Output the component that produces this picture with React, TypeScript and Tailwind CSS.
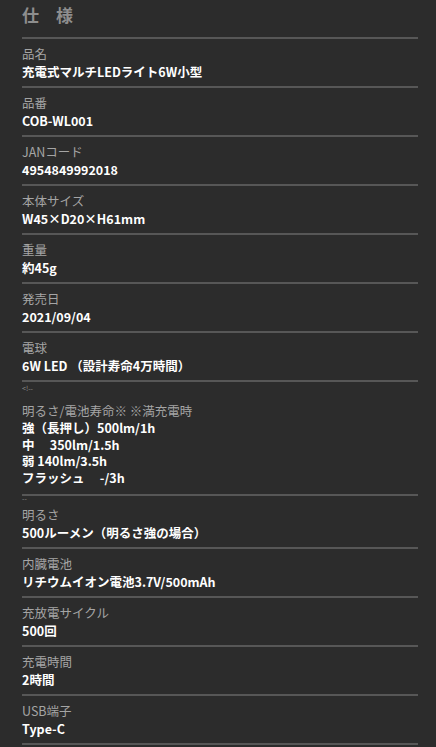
const specs = [
  { label: '品名', value: '充電式マルチLEDライト6W小型' },
  { label: '品番', value: 'COB-WL001' },
  { label: 'JANコード', value: '4954849992018' },
  { label: '本体サイズ', value: 'W45×D20×H61mm' },
  { label: '重量', value: '約45g' },
  { label: '発売日', value: '2021/09/04' },
  { label: '電球', value: '6W LED （設計寿命4万時間）' },
]

const specsAfter = [
  { label: '明るさ', value: '500ルーメン（明るさ強の場合）' },
  { label: '内臓電池', value: 'リチウムイオン電池3.7V/500mAh' },
  { label: '充放電サイクル', value: '500回' },
  { label: '充電時間', value: '2時間' },
  { label: 'USB端子', value: 'Type-C' },
]

const brightness = ['強（長押し）500lm/1h', '中　 350lm/1.5h', '弱 140lm/3.5h', 'フラッシュ　 -/3h']

function SpecRow({ label, value, note }: { label: string; value: string; note?: string }) {
  return (
    <div className="border-b-2 border-[#575757] pt-[6px] pb-[5px]">
      {note && <div className="text-[7px] leading-[4px] h-[4px] -mt-[6px] mb-[6px] text-[#8a8a8a]">{note}</div>}
      <div className="text-[12.5px] leading-[18px] text-[#a5a5a5]">{label}</div>
      <div className="text-[12.5px] leading-[18px] font-bold text-white">{value}</div>
    </div>
  )
}

export default function App() {
  return (
    <div className="min-h-screen bg-[#2c2c2c]" style={{ fontFamily: '"Noto Sans CJK JP", "Noto Sans", sans-serif' }}>
      <div className="ml-[22px] mr-[18px]">
        <div className="border-b-2 border-[#575757] pt-[3px] pb-[10px]">
          <h2 className="text-[17px] leading-[24px] font-bold text-[#8e8e8e]">仕　様</h2>
        </div>

        {specs.map((s) => (
          <SpecRow key={s.label} label={s.label} value={s.value} />
        ))}

        <div className="border-b-2 border-[#575757] pb-[8px]">
          <div className="text-[7px] leading-[12px] text-[#8a8a8a]">&lt;!--</div>
          <div className="mt-[8px] text-[12.5px] leading-[18px] text-[#a5a5a5]">明るさ/電池寿命※ ※満充電時</div>
          {brightness.map((b) => (
            <div key={b} className="text-[12.5px] leading-[16.5px] font-bold text-white whitespace-pre">
              {b}
            </div>
          ))}
        </div>

        {specsAfter.map((s, i) => (
          <SpecRow key={s.label} label={s.label} value={s.value} note={i === 0 ? '--' : undefined} />
        ))}
      </div>
    </div>
  )
}
